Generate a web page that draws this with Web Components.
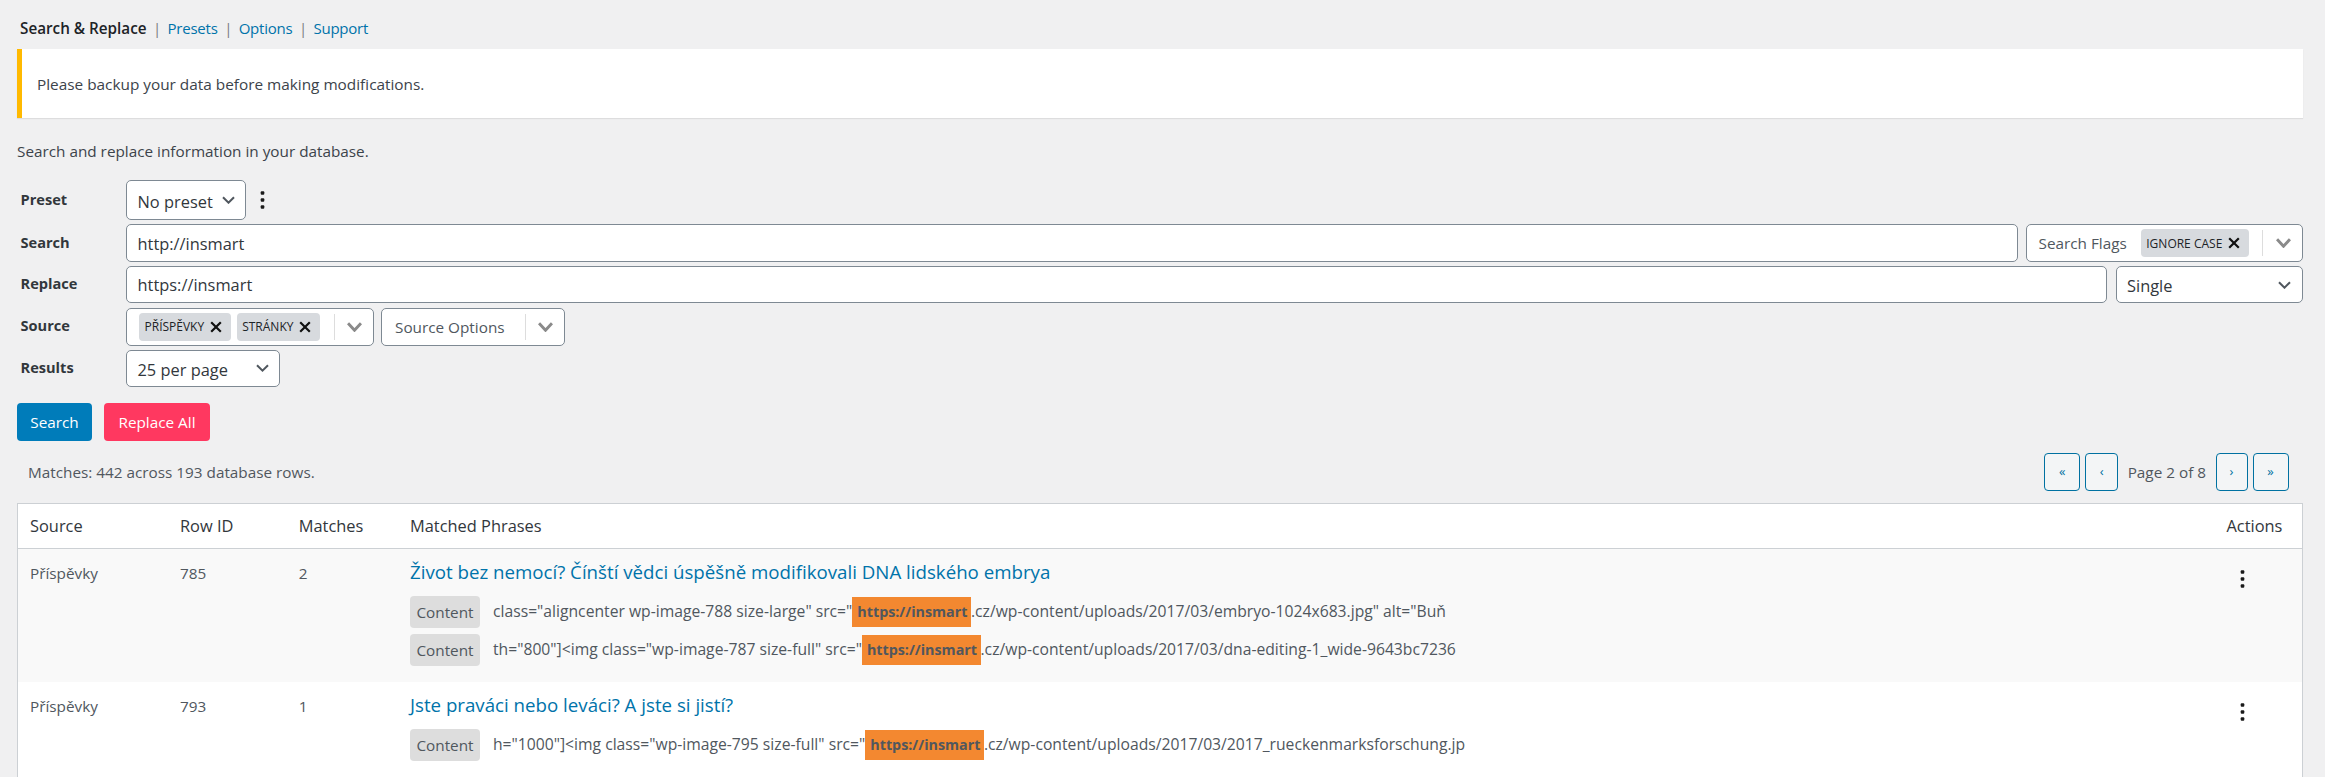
<!doctype html>
<html lang="cs"><head><meta charset="utf-8"><title>Search &amp; Replace</title>
<style>
html,body{margin:0;height:777px;overflow:hidden;background:#f0f0f1}
body{font-family:"Open Sans","Noto Sans",sans-serif;color:#3c434a}
</style></head><body>
<sr-app>
  <sr-nav>
    <b>Search &amp; Replace</b><i>|</i><a>Presets</a><i>|</i><a>Options</a><i>|</i><a>Support</a>
  </sr-nav>
  <sr-notice>Please backup your data before making modifications.</sr-notice>
  <sr-desc>Search and replace information in your database.</sr-desc>
  <sr-form>
    <sr-field h="40"><span slot="label">Preset</span>
      <sr-select w="120">No preset</sr-select><sr-kebab style="margin-left:14px"></sr-kebab>
    </sr-field>
    <sr-field h="38"><span slot="label">Search</span>
      <sr-input>http://insmart</sr-input>
      <sr-multi style="margin-left:8px;width:277px;padding-left:12px">
        <span style="margin-right:14px">Search Flags</span><sr-chip>IGNORE CASE</sr-chip>
      </sr-multi>
    </sr-field>
    <sr-field h="37"><span slot="label">Replace</span>
      <sr-input>https://insmart</sr-input>
      <sr-select w="187" style="margin-left:9px">Single</sr-select>
    </sr-field>
    <sr-field h="38"><span slot="label">Source</span>
      <sr-multi style="width:248px;padding-left:12px">
        <sr-chip>PŘÍSPĚVKY</sr-chip><sr-chip style="margin-left:6px">STRÁNKY</sr-chip>
      </sr-multi>
      <sr-multi style="margin-left:7px;width:184px;padding-left:13px"><span>Source Options</span></sr-multi>
    </sr-field>
    <sr-field h="37"><span slot="label">Results</span>
      <sr-select w="154">25 per page</sr-select>
    </sr-field>
  </sr-form>
  <sr-actions>
    <sr-btn style="background:#007cba;width:75px">Search</sr-btn>
    <sr-btn style="background:#ff3860;width:106px;margin-left:12px">Replace All</sr-btn>
  </sr-actions>
  <sr-summary>
    <span>Matches: 442 across 193 database rows.</span>
    <sr-pager>
      <sr-page style="width:36px">«</sr-page><sr-page style="width:33px">‹</sr-page>
      <span style="margin:0 4.5px">Page 2 of 8</span>
      <sr-page style="width:32px">›</sr-page><sr-page style="width:36px">»</sr-page>
    </sr-pager>
  </sr-summary>
  <sr-table>
    <sr-grid head>
      <sr-cell>Source</sr-cell><sr-cell>Row ID</sr-cell><sr-cell>Matches</sr-cell><sr-cell>Matched Phrases</sr-cell><sr-cell style="padding-left:0">Actions</sr-cell>
    </sr-grid>
    <sr-grid alt>
      <sr-cell>Příspěvky</sr-cell><sr-cell>785</sr-cell><sr-cell>2</sr-cell>
      <sr-cell>
        <sr-title>Život bez nemocí? Čínští vědci úspěšně modifikovali DNA lidského embrya</sr-title>
        <sr-match>class="aligncenter wp-image-788 size-large" src="<mark>https://insmart</mark>.cz/wp-content/uploads/2017/03/embryo-1024x683.jpg" alt="Buň</sr-match>
        <sr-match>th="800"]&lt;img class="wp-image-787 size-full" src="<mark>https://insmart</mark>.cz/wp-content/uploads/2017/03/dna-editing-1_wide-9643bc7236</sr-match>
      </sr-cell>
      <sr-cell style="padding-left:13px"><sr-kebab style="height:38px"></sr-kebab></sr-cell>
    </sr-grid>
    <sr-grid>
      <sr-cell>Příspěvky</sr-cell><sr-cell>793</sr-cell><sr-cell>1</sr-cell>
      <sr-cell>
        <sr-title>Jste praváci nebo leváci? A jste si jistí?</sr-title>
        <sr-match>h="1000"]&lt;img class="wp-image-795 size-full" src="<mark>https://insmart</mark>.cz/wp-content/uploads/2017/03/2017_rueckenmarksforschung.jp</sr-match>
      </sr-cell>
      <sr-cell style="padding-left:13px"><sr-kebab style="height:38px"></sr-kebab></sr-cell>
    </sr-grid>
  </sr-table>
</sr-app>
<script>
const base=':host{box-sizing:border-box}';
function def(name,html,init){
  customElements.define(name,class extends HTMLElement{
    constructor(){super();this.attachShadow({mode:'open'}).innerHTML=html;}
    connectedCallback(){if(init)init(this);}
  });
}
const chev=(w,h,sw,col)=>`<svg width="${w}" height="${h}" viewBox="0 0 ${w} ${h}" fill="none" stroke="${col}" stroke-width="${sw}"><path d="M1 1.2 L${w/2} ${h-1.8} L${w-1} 1.2"/></svg>`;

def('sr-app',`<style>${base}:host{display:block;padding:17px 22.5px 0 17px}</style><slot></slot>`);
def('sr-nav',`<style>${base}:host{display:flex;align-items:center;gap:9.5px;height:21px;padding-left:3px;font-size:15px;letter-spacing:-.015em;color:#0073aa}
::slotted(b){font-weight:600;color:#1d2327;font-size:15.25px;letter-spacing:0}
::slotted(i){font-style:normal;color:#787c82;width:2px;display:flex;justify-content:center;font-size:15px}
</style><slot></slot>`);
def('sr-notice',`<style>${base}:host{display:flex;align-items:center;margin-top:11px;height:69px;background:#fff;border-left:5px solid #ffb900;box-shadow:0 1px 1px rgba(0,0,0,.08);padding-left:15px;font-size:15.35px;color:#3c434a}</style><slot></slot>`);
def('sr-desc',`<style>${base}:host{display:block;margin-top:22px;height:22px;line-height:22px;font-size:15.3px;color:#3c434a}</style><slot></slot>`);
def('sr-form',`<style>${base}:host{display:flex;flex-direction:column;gap:4.2px;margin-top:18px}</style><slot></slot>`);
def('sr-field',`<style>${base}:host{display:flex;align-items:stretch}
.l{flex:0 0 109px;padding-left:3.5px;display:flex;align-items:center;padding-bottom:3px;box-sizing:border-box;font-weight:700;font-size:14.6px;color:#32373c}
</style><div class="l"><slot name="label"></slot></div><slot></slot>`,el=>{el.style.height=el.getAttribute('h')+'px'});
def('sr-select',`<style>${base}:host{display:flex;align-items:center;justify-content:space-between;background:#fff;border:1.25px solid #7e8993;border-radius:5px;padding:2px 10.5px 0 10.5px;font-size:16.4px;color:#32373c}
svg{margin-bottom:2px}</style><slot></slot>${chev(13,8.5,2,'#50575e')}`,el=>{el.style.width=el.getAttribute('w')+'px'});
def('sr-input',`<style>${base}:host{flex:1;display:flex;align-items:center;background:#fff;border:1.25px solid #7e8993;border-radius:5px;padding-left:10.5px;font-size:16.4px;color:#32373c}</style><slot></slot>`);
def('sr-kebab',`<style>${base}:host{display:inline-flex;align-items:center;height:40px}
svg{display:block}</style><svg width="5" height="18" viewBox="0 0 5 18" fill="#1a1a1a"><rect x=".7" y=".2" width="3.6" height="3.6" rx="1"/><rect x=".7" y="7.2" width="3.6" height="3.6" rx="1"/><rect x=".7" y="14.2" width="3.6" height="3.6" rx="1"/></svg>`);
def('sr-multi',`<style>${base}:host{display:flex;align-items:center;background:#fff;border:1.25px solid #7e8993;border-radius:5px;font-size:15.3px;color:#50575e}
.end{margin-left:auto;display:flex;align-items:center;height:26px;border-left:1.25px solid #ddd;padding:0 11px 0 12.5px}
</style><slot></slot><div class="end">${chev(15,10,3,'#8a8a8a')}</div>`);
def('sr-chip',`<style>${base}:host{display:inline-flex;align-items:center;height:28px;background:#d7dade;border-radius:4px;padding:0 8.5px 0 5.5px;font-size:12px;color:#1d2327;white-space:nowrap}
svg{margin-left:6px}</style><slot></slot><svg width="12" height="12" viewBox="0 0 12 12" stroke="#111" stroke-width="2.2" fill="none"><path d="M1.2 1.2 10.8 10.8M10.8 1.2 1.2 10.8"/></svg>`);
def('sr-actions',`<style>${base}:host{display:flex;margin-top:16px;height:38px}</style><slot></slot>`);
def('sr-btn',`<style>${base}:host{display:flex;align-items:center;justify-content:center;color:#fff;border-radius:4px;font-size:15.3px;height:38px}</style><slot></slot>`);
def('sr-summary',`<style>${base}:host{display:flex;align-items:center;justify-content:space-between;margin-top:12px;height:38px;padding:0 14px 0 11px;font-size:15.3px;color:#50575e}</style><slot></slot>`);
def('sr-pager',`<style>${base}:host{display:flex;align-items:center;gap:5px}</style><slot></slot>`);
def('sr-page',`<style>${base}:host{display:flex;align-items:center;justify-content:center;height:38px;background:#f3f5f6;border:1.25px solid #0071a1;border-radius:4px;color:#0071a1;font-size:13px;padding-bottom:1px}</style><slot></slot>`);
def('sr-table',`<style>${base}:host{display:block;margin-top:12px;background:#fff;border:1.25px solid #ccd0d4;border-bottom:0}</style><slot></slot>`);
def('sr-grid',`<style>${base}:host{display:grid;grid-template-columns:150px 118.7px 111.3px 1fr 75px;font-size:15.3px;color:#50575e;padding-top:11px;padding-bottom:16px;line-height:26px}
:host([alt]){background:#f9f9f9}
:host([head]){height:45px;padding:0;align-items:center;border-bottom:1.25px solid #ccd0d4;background:#fff;font-size:16.4px;color:#32373c}
</style><slot></slot>`);
def('sr-cell',`<style>${base}:host{display:block;padding-left:12px;min-width:0}</style><slot></slot>`);
def('sr-title',`<style>${base}:host{display:block;height:24px;line-height:24px;font-size:18.7px;color:#0073aa;margin-bottom:12px}</style><slot></slot>`);
def('sr-match',`<style>${base}:host{display:flex;align-items:center;height:32px;font-size:15.7px;color:#50575e;white-space:nowrap}
:host(:not(:last-child)){margin-bottom:6px}
.b{flex:none;width:70px;height:32px;display:flex;align-items:center;justify-content:center;background:#ddd;border-radius:4px;margin-right:13px;font-size:15.3px;color:#50575e}
.t{display:block}
::slotted(mark){display:inline-block;background:#f38830;color:#50575e;font-weight:700;font-size:14.3px;height:30px;line-height:30px;padding:0 3.5px 0 5px}
</style><span class="b">Content</span><span class="t"><slot></slot></span>`);
</script>
</body></html>
